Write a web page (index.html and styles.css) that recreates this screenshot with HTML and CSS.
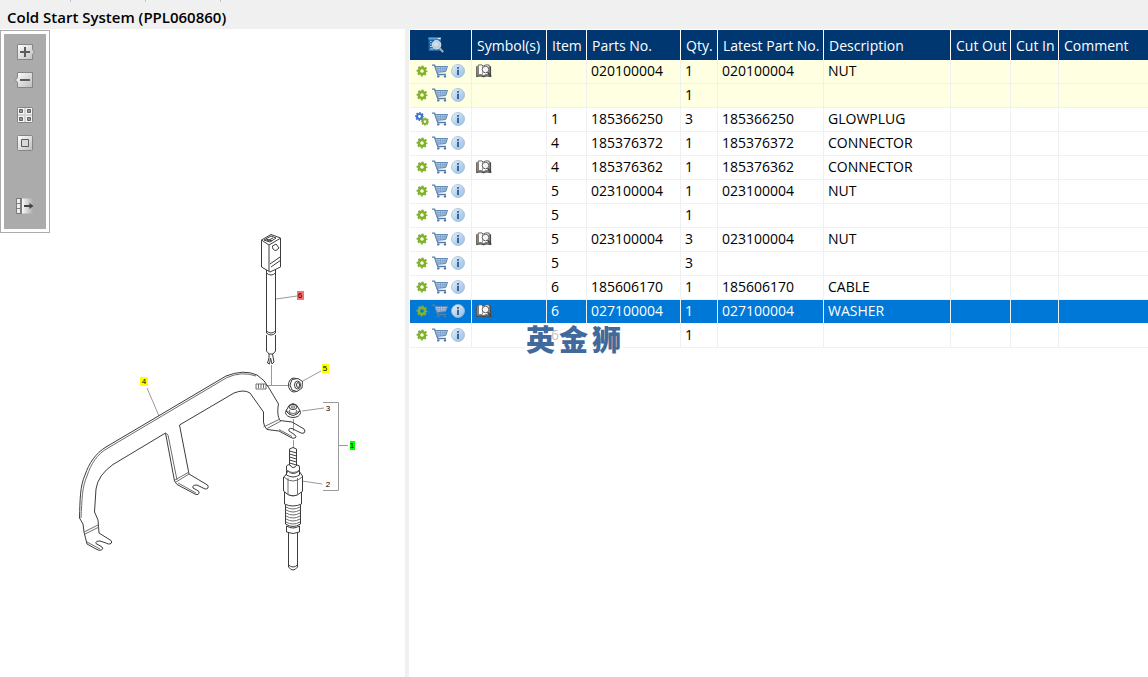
FILE: index.html
```
<!DOCTYPE html>
<html lang="en">
<head>
<meta charset="utf-8">
<title>Cold Start System (PPL060860)</title>
<link rel="stylesheet" href="styles.css">
</head>
<body>
<svg class="defs" aria-hidden="true">
  <defs>
    <linearGradient id="btn" x1="0" y1="0" x2="1" y2="1"><stop offset="0" stop-color="#ffffff"/><stop offset="1" stop-color="#bdbdbd"/></linearGradient>
    <linearGradient id="fade" x1="0" y1="0" x2="1" y2="0"><stop offset="0" stop-color="#f8f8f8"/><stop offset="1" stop-color="#ababab"/></linearGradient>
    <linearGradient id="blue" x1="0" y1="0" x2="1" y2="1"><stop offset="0" stop-color="#e6f2fc"/><stop offset="1" stop-color="#94bbdd"/></linearGradient>
  </defs>
  <symbol id="gear" viewBox="0 0 12 12">
    <circle cx="6" cy="6" r="3.1" fill="none" stroke="#82b22c" stroke-width="2.6"/>
    <circle cx="6" cy="6" r="4.6" fill="none" stroke="#82b22c" stroke-width="1.7" stroke-dasharray="2 1.613" stroke-dashoffset="1"/>
  </symbol>
  <symbol id="gears" viewBox="0 0 14 14">
    <circle cx="4.500" cy="4.500" r="2.500" fill="none" stroke="#3f74d1" stroke-width="2.2"/>
    <circle cx="4.500" cy="4.500" r="3.800" fill="none" stroke="#3f74d1" stroke-width="1.5" stroke-dasharray="1.5 1.485" stroke-dashoffset="0.75"/>
    <circle cx="10" cy="9.600" r="2.300" fill="none" stroke="#82b22c" stroke-width="2"/>
    <circle cx="10" cy="9.600" r="3.400" fill="none" stroke="#82b22c" stroke-width="1.4" stroke-dasharray="1.4 1.27" stroke-dashoffset="0.7"/>
  </symbol>
  <symbol id="cart" viewBox="0 0 16 14">
    <path d="M0 1.200H2.600L5.800 10.500H14" fill="none" stroke="#5580ae" stroke-width="1.3"/>
    <path d="M3 2.500H15.500L13.600 7.600L4.800 8.300Z" fill="#c3d5e8" stroke="#5b85b3" stroke-width="1"/>
    <path d="M3.600 4.400H14.700M4.200 6.200H14M6 2.500V8M8.400 2.500V8M10.800 2.500V8M13 2.500V7.600" stroke="#6f95be" stroke-width="0.700"/>
    <circle cx="6.300" cy="12.400" r="1.200" fill="#4c78aa"/><circle cx="13" cy="12.400" r="1.200" fill="#4c78aa"/>
  </symbol>
  <symbol id="info" viewBox="0 0 14 14">
    <circle cx="7" cy="7" r="6.500" fill="url(#blue)" stroke="#9dbbd8" stroke-width="0.800"/>
    <path d="M6 3H8V4.700H6ZM6 5.800H8V11H6Z" fill="#3867a0"/>
  </symbol>
  <symbol id="book" viewBox="0 0 16 14">
    <path d="M.8 2.200V12.500Q5 11 7.600 12.800Q10.500 11 14.500 12.500V2.200" fill="#c9c4b8" stroke="#4c4a46" stroke-width="1.200"/>
    <path d="M2.300 1Q5.600 .2 7.600 2Q9.600 .2 13.200 1V11Q9.600 10 7.600 11.600Q5.600 10 2.300 11Z" fill="#fff" stroke="#55534f" stroke-width="0.900"/>
    <path d="M6.500 2V10.500" stroke="#888" stroke-width="0.800"/>
    <circle cx="9.500" cy="5.500" r="3.300" fill="#f3f4f5" stroke="#666" stroke-width="1"/>
    <path d="M11.600 8.200L15 12.600" stroke="#444" stroke-width="1.700"/>
  </symbol>
  <symbol id="preview" viewBox="0 0 16 16">
    <path d="M0.500 0.500H13V14H0.500Z" fill="#1c67a4"/>
    <path d="M0.500 0.500H13V2.500H0.500Z" fill="#5aa5d8"/><path d="M10 1.500H12.500" stroke="#fff" stroke-width="1"/>
    <path d="M2 4.500H3.500M2 7H3.500M2 9.500H4M2 12H6" stroke="#bcdaf0" stroke-width="1"/>
    <circle cx="8.500" cy="7.800" r="4.300" fill="#b9cfdd" stroke="#dfe8ee" stroke-width="1"/>
    <circle cx="8" cy="7.200" r="2.300" fill="#cfe0ea"/>
    <path d="M11.500 11L15.200 15.200" stroke="#9fb2c2" stroke-width="2"/>
  </symbol>
</svg>

<header class="title-bar"><h1>Cold Start System (PPL060860)</h1></header>

<main class="workspace">
  <section class="drawing" aria-label="Parts drawing">
    <div class="tools-frame">
      <div class="tools">
        <button type="button" aria-label="Zoom in"><svg viewBox="0 0 20 16"><path d="M2.500 .5H17.500V5.500L19.500 8L17.500 10.500V15.500H2.500Z" fill="url(#btn)" stroke="#858585"/><path d="M10 3V13M5 8H15" stroke="#5b5b5b" stroke-width="2"/></svg></button>
        <button type="button" aria-label="Zoom out"><svg viewBox="0 0 20 16"><path d="M2.500 .5H17.500V15.500H2.500V10.500L.5 8L2.500 5.500Z" fill="url(#btn)" stroke="#858585"/><path d="M5 8H15" stroke="#5b5b5b" stroke-width="2"/></svg></button>
        <button type="button" class="new-group" aria-label="Fit to window"><svg viewBox="0 0 20 16"><rect x="2.500" y=".5" width="15" height="15" rx="1" fill="#f4f4f4" stroke="#858585"/><path d="M10 1V15M3 8H17" stroke="#d4d4d4" stroke-width="2"/><path d="M4.500 2.500h3v3h-3zM12.500 2.500h3v3h-3zM4.500 10.500h3v3h-3zM12.500 10.500h3v3h-3z" fill="#999" stroke="#626262"/></svg></button>
        <button type="button" aria-label="Actual size"><svg viewBox="0 0 20 16"><rect x="2.500" y=".5" width="15" height="15" rx="1" fill="url(#btn)" stroke="#858585"/><path d="M6.500 4.500h7v7h-7z" fill="#d8d8d8" stroke="#5b5b5b"/></svg></button>
        <button type="button" class="last-group" aria-label="Hide list"><svg viewBox="0 0 20 16"><path d="M1 0H6V16H1Z" fill="#7c7c7c"/><path d="M2 1h3v4h-3zM2 6h3v4h-3zM2 11h3v4h-3z" fill="#eee"/><path d="M7 .5H18V15.500H7Z" fill="url(#fade)"/><path d="M6.500 0V16" stroke="#7c7c7c"/><path d="M9 8H16" stroke="#444" stroke-width="2"/><path d="M14.500 5L18.500 8L14.500 11Z" fill="#444"/></svg></button>
      </div>
    </div>
    <svg class="diagram" viewBox="0 29 405 648" role="img" aria-label="Exploded view of the cold start system">
      <g class="leader">
        <path d="M147 388L159 416M276 299L297 296M301 382L321 371M302 411L324 408M302 481L322 484M323 402.500H338.500V490.500H323M338.500 445.500H348M271.500 365V385M266 385.500H288M293.500 419V431M293.500 440V448"/>
      </g>
      <g class="part">
        <!-- clamp strip with three forked feet -->
        <path d="M79.500 518C80 500 80 486 85 475C89 463 96 453 106 447L226 376Q244 369 257 375Q265 380 269 388L278.500 404C277 412 278 417 280 420.500L292 422L304 429Q306 431 304 433Q302 434 299 432L292 428.500Q288 428 289 431L295 435Q297 437 295 438Q293 439 290 437L279 431L267 429.500Q264 427 263.500 422V412L250 393Q244 389 234 393L179.500 425L189 474L207.500 485Q209 487 207.500 488.500Q206 490 203 488L197 485Q192 485 193 488L198.500 491Q200 493 198 494.500Q196 495 193 493L177 484.500L174.500 481L165.500 433L113 464.500Q98 475 96 489L94.500 512L98 520L99 533L111 540.500Q112.500 542 111 543.500Q109 545 106 543L100 541Q95 541 96 543.500L102 547Q103.500 549 101.500 550Q99 551 96 549L87 544L84 532L83 524Z"/>
        <path class="thin" d="M81 518C82 500 82 487 87 476C91 464 97 454 108 448L227 377.500Q242 371 256 376M84 532L98 525M85 534L99 527M87 542L100 549M175 480L189 472M176 482L189 474M178 483L196 493M165.500 433L168 435L177 480M263.500 427L280 419M266 429L281 421M279 429.500L292 436.500"/>
        <!-- cable with connector -->
        <path d="M261.500 240V267L270 272L280.500 267V238L271 234.500ZM261.500 240L269 245L280 238.500M269 245V271M264 240L271 236L276 238L270 242ZM266 239L272 241M267 241L273 238M270 264L280 257M271 267L281 260M266.500 273V333M275.500 273V333M266.500 273Q271 277 275.500 273V270M266.500 270V273M266.500 333Q271 337 275.500 333M266.500 331Q271 335 275.500 331M266.500 335V351L269 354H273L275.500 351V335M269 354V358L267.500 363L269.500 364L270.500 358L272 364L274 362L272.500 354"/>
        <path d="M272.500 246L276 244L279 248L276 250.500Q272 250 272.500 246Z"/>
        <!-- stud and flange nuts -->
        <path class="thin" d="M256 384h10v5h-10zM258.500 384v4M261 384v4M263.500 384v4"/>
        <ellipse class="solid" cx="294" cy="385" rx="5.500" ry="7"/><path class="solid" d="M292 379.500L298 378.500L302.500 381.500L302 388L297 391.500L292 390L290 385Z"/><ellipse cx="297.500" cy="385" rx="3" ry="4"/><ellipse cx="298" cy="385" rx="1.500" ry="2.500"/>
        <ellipse cx="293" cy="412.500" rx="7.500" ry="5"/><path class="solid" d="M286 411L289 405.500L293 403.500L297 405.500L300 411L297 414L293 415.500L289 414Z"/><ellipse cx="293" cy="407" rx="4" ry="2.500"/><ellipse class="thin" cx="293" cy="407" rx="2" ry="1"/><path class="thin" d="M289.500 410L290 414M296.500 410L296 414M287 411Q293 416 299 411"/>
        <!-- glow plug -->
        <path d="M289.500 449Q293 446 296.500 449V468H289.500ZM289.500 451L296.500 453M289.500 454L296.500 456M289.500 457L296.500 459M289.500 460L296.500 462M289.500 463L296.500 465"/>
        <path class="solid" d="M286.500 466Q288 464 290 465Q293 470 297 465Q300 465 299.500 468V475Q293 479 286.500 475ZM285 476L288 471Q293 476 299 471L302.500 476V491L299 495Q293 497 288 495L283.500 491V477Z"/>
        <path class="solid" d="M284.500 492Q293 500 301.500 492V504Q293 508 284.500 504ZM285.500 505V524Q293 529 300.500 524V505"/>
        <path class="thin" d="M286.500 470Q293 475 299.500 470M288 478V494M297.500 478V494M284 477L288 480Q293 482 298 480L302 477M286 507Q293 511 300 507M286 510Q293 514 300 510M286 513Q293 517 300 513M286 516Q293 520 300 516M286 519Q293 523 300 519M286 522Q293 526 300 522"/>
        <path class="solid" d="M286.500 526Q293 530 299.500 526V532Q293 535 286.500 532ZM288.500 533V567Q293 573 297.500 567V533M288.500 565Q293 569 297.500 565"/>
      </g>
      <g class="callout">
        <rect x="140" y="377" width="8" height="9" fill="#ff0"/><text x="144" y="384">4</text>
        <rect x="297" y="291" width="7" height="9" fill="#fc7070"/><text x="300" y="298">6</text>
        <rect x="322" y="364" width="7" height="9" fill="#ff0"/><text x="325" y="371">5</text>
        <rect x="350" y="441" width="5" height="9" fill="#0f0"/><text x="352" y="448">1</text>
        <text x="328" y="411">3</text><text x="328" y="487">2</text>
      </g>
    </svg>
  </section>

  <div class="splitter"></div>

  <section class="parts">
    <table>
      <colgroup><col class="w-actions"><col class="w-symbol"><col class="w-item"><col class="w-part"><col class="w-qty"><col class="w-latest"><col class="w-desc"><col class="w-out"><col class="w-in"><col></colgroup>
      <thead><tr><th class="preview"><svg role="img" aria-label="Preview"><use href="#preview"/></svg></th><th>Symbol(s)</th><th>Item</th><th>Parts No.</th><th>Qty.</th><th>Latest Part No.</th><th>Description</th><th>Cut Out</th><th>Cut In</th><th>Comment</th></tr></thead>
      <tbody id="rows"></tbody>
    </table>
    <div class="watermark" lang="zh"><span>英</span><span>金</span><span>狮</span></div>
  </section>
</main>
<script src="rows.js"></script>
</body>
</html>
```

FILE: styles.css
```
* { box-sizing: border-box; }

body {
  margin: 0;
  min-height: 100vh;
  display: flex;
  flex-direction: column;
  background: #fff;
  color: #000;
  font: 14px/20px "Open Sans", "Noto Sans", sans-serif;
}

.defs { position: absolute; width: 0; height: 0; }

.title-bar {
  background: repeating-linear-gradient(90deg, #c4c4c4 0 1px, transparent 1px 75px) 70px 0 / 151px 2px no-repeat #f0f0f0;
  padding: 7px 7px 2px;
}
.title-bar h1 { margin: 0; font-size: 15px; line-height: 20px; font-weight: 600; }

.workspace {
  flex: 1;
  display: grid;
  grid-template-columns: minmax(240px, 405px) 4px minmax(0, 1fr);
}

.drawing { position: relative; }
.diagram { display: block; width: 100%; height: auto; }
.splitter { background: #f0f0f0; }

.tools-frame {
  position: absolute;
  top: 1px;
  left: 0;
  padding: 3px;
  background: #fff;
  border: 1px solid #ababab;
}
.tools {
  display: flex;
  flex-direction: column;
  gap: 12px;
  padding: 10px 11px 15px;
  background: #ababab;
}
.tools button { display: block; padding: 0; border: 0; background: none; width: 20px; height: 16px; }
.tools svg { display: block; width: 20px; height: 16px; }
.tools .new-group { margin-top: 7px; }
.tools .last-group { margin-top: 35px; }

.leader path { fill: none; stroke: #9a9a9a; stroke-width: 1; }
.part path, .part ellipse { fill: none; stroke: #3c3c3c; stroke-width: 1; stroke-linejoin: round; }
.part .thin { stroke: #6e6e6e; }
.part .solid { fill: #fff; }
.callout text { font: 8px "Liberation Sans", sans-serif; text-anchor: middle; fill: #000; }

.parts { position: relative; padding: 1px 0 0 1px; }
table { width: 100%; table-layout: fixed; border-collapse: separate; border-spacing: 0; }
.w-actions { width: 62px; }
.w-symbol { width: 75px; }
.w-item { width: 40px; }
.w-part { width: 94px; }
.w-qty { width: 37px; }
.w-latest { width: 106px; }
.w-desc { width: 127px; }
.w-out { width: 60px; }
.w-in { width: 48px; }

th {
  height: 30px;
  padding: 2px 0 0 5px;
  background: #003770;
  color: #fff;
  font-weight: 400;
  text-align: left;
  white-space: nowrap;
  border-right: 1px solid #fff;
}
th:last-child, td:last-child { border-right: 0; }
td {
  height: 24px;
  padding: 0 0 1px 4px;
  border-right: 1px solid #f0f0f0;
  border-bottom: 1px solid #f0f0f0;
  white-space: nowrap;
}
.preview { padding: 0 0 0 18px; }
.preview svg { display: block; width: 16px; height: 16px; }

.marked td { background: #ffffe1; }
.selected td { background: #0078d7; color: #fff; border-bottom-color: #fff; }

.actions { display: flex; align-items: center; gap: 3px; padding-left: 1px; }
.actions button { display: block; padding: 0; border: 0; background: none; }
.actions svg, .book { display: block; }
.gear { width: 14px; height: 12px; }
.gears { width: 14px; height: 14px; }
.cart { width: 16px; height: 14px; }
.info { width: 14px; height: 14px; }
.book { width: 16px; height: 14px; }

.watermark {
  position: absolute;
  top: 295px;
  left: 115px;
  display: flex;
  gap: 4px;
  padding: 0 2px;
  background: rgba(255, 255, 255, 0.75);
  color: #41699b;
  font: 900 29px/28px "Noto Sans CJK SC", sans-serif;
}
```

FILE: rows.js
```
const parts = [
  ["", "020100004", "1", "NUT", "book", "marked"],
  ["", "", "1", "", "", "marked"],
  ["1", "185366250", "3", "GLOWPLUG", "", ""],
  ["4", "185376372", "1", "CONNECTOR", "", ""],
  ["4", "185376362", "1", "CONNECTOR", "book", ""],
  ["5", "023100004", "1", "NUT", "", ""],
  ["5", "", "1", "", "", ""],
  ["5", "023100004", "3", "NUT", "book", ""],
  ["5", "", "3", "", "", ""],
  ["6", "185606170", "1", "CABLE", "", ""],
  ["6", "027100004", "1", "WASHER", "book", "selected"],
  ["6", "", "1", "", "", ""]
];
const icon = name => `<svg class="${name}" aria-hidden="true"><use href="#${name}"/></svg>`;
const button = (name, label) => `<button type="button" aria-label="${label}">${icon(name)}</button>`;
document.getElementById("rows").innerHTML = parts.map(([item, number, qty, text, symbol, state]) => `
  <tr class="${state}">
    <td><div class="actions">${button(item === "1" ? "gears" : "gear", "Part details")}${button("cart", "Add to cart")}${button("info", "Information")}</div></td>
    <td>${symbol ? icon(symbol) : ""}</td>
    <td>${item}</td><td>${number}</td><td>${qty}</td><td>${number}</td><td>${text}</td><td></td><td></td><td></td>
  </tr>`).join("");
```
